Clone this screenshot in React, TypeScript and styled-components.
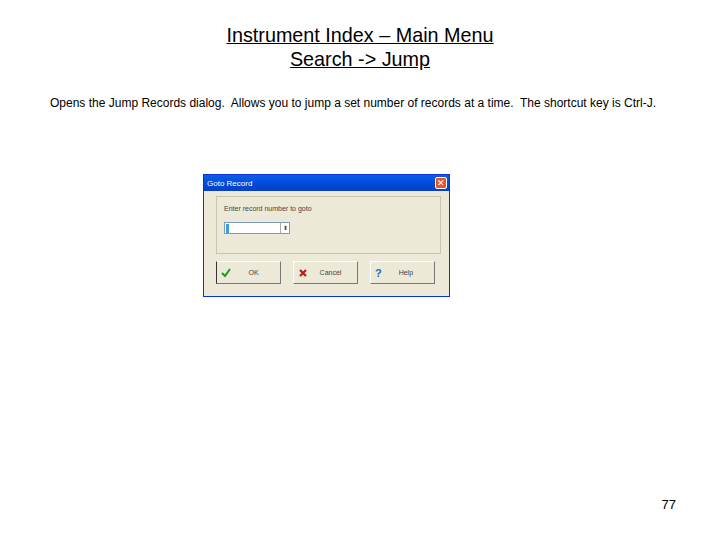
import React from 'react'
import styled, { createGlobalStyle } from 'styled-components'

const Global = createGlobalStyle`
  body { margin: 0; background: #fff; font-family: "Liberation Sans", Arial, sans-serif; }
`

const Page = styled.div`
  width: 720px;
  height: 540px;
  display: flex;
  flex-direction: column;
  color: #000;
`

const Title = styled.h1`
  margin: 23px 0 0;
  font-size: 19.8px;
  font-weight: normal;
  line-height: 24px;
  text-align: center;
  text-decoration: underline;
`

const Text = styled.p`
  margin: 25px 0 0 50px;
  font-size: 12px;
`

const DialogRow = styled.div`
  margin: 64px 0 0 203px;
`

const Window = styled.div`
  width: 247px;
  height: 123px;
  background: #ece9d8;
  border: 1px solid #0831d9;
  box-sizing: border-box;
  display: flex;
  flex-direction: column;
  font-size: 7px;
`

const TitleBar = styled.div`
  height: 16px;
  background: linear-gradient(#0a5ee6, #0049d8 60%, #0a3fc0);
  color: #fff;
  font-size: 8px;
  display: flex;
  align-items: center;
  justify-content: space-between;
  padding: 0 2px 0 3px;
`

const Close = styled.div`
  width: 12px;
  height: 12px;
  border: 1px solid #fff;
  border-radius: 2px;
  background: #e0582f;
  box-sizing: border-box;
  display: flex;
  align-items: center;
  justify-content: center;
  font-size: 9px;
  line-height: 1;
`

const Group = styled.div`
  margin: 5px 8px 0 12px;
  height: 58px;
  border: 1px solid #c8c5b4;
  padding: 8px 0 0 7px;
  box-sizing: border-box;
  color: #444;
`

const Input = styled.div`
  margin-top: 10px;
  width: 66px;
  height: 12px;
  background: #fff;
  border: 1px solid #7f9db9;
  box-sizing: border-box;
  display: flex;
  justify-content: space-between;
  align-items: center;
  font-size: 7px;
`

const Caret = styled.span`
  width: 3px;
  height: 9px;
  background: #3a9ed8;
  margin-left: 1px;
`

const Spin = styled.span`
  width: 8px;
  height: 10px;
  border-left: 1px solid #aaa;
  text-align: center;
  line-height: 10px;
  font-size: 6px;
`

const Buttons = styled.div`
  display: flex;
  gap: 12px;
  margin: 7px 0 0 12px;
`

const Button = styled.div<{ $pressed?: boolean }>`
  width: 65px;
  height: 23px;
  box-sizing: border-box;
  display: flex;
  align-items: center;
  padding: 0 4px;
  border-top: 1px solid #fff;
  border-left: 1px solid ${p => (p.$pressed ? '#333' : '#fff')};
  border-right: 1px solid #777;
  border-bottom: 1px solid #777;
  color: #444;
`

const Label = styled.span`
  flex: 1;
  text-align: center;
`

const PageNumber = styled.div`
  margin: 0 44px 28px auto;
  font-size: 13px;
`

export default function App() {
  return (
    <Page>
      <Global />
      <Title>
        Instrument Index – Main Menu
        <br />
        Search -&gt; Jump
      </Title>
      <Text>
        Opens the Jump Records dialog.&nbsp; Allows you to jump a set number of records at a time.&nbsp; The shortcut key is Ctrl-J.
      </Text>
      <DialogRow>
        <Window>
          <TitleBar>
            <span>Goto Record</span>
            <Close>✕</Close>
          </TitleBar>
          <Group>
            Enter record number to goto
            <Input>
              <Caret />
              <Spin>⬍</Spin>
            </Input>
          </Group>
          <Buttons>
            <Button $pressed>
              <svg width="10" height="10" viewBox="0 0 10 10">
                <path d="M1 5 L4 8 L9 1" stroke="#1a9a1a" strokeWidth="2" fill="none" />
              </svg>
              <Label>OK</Label>
            </Button>
            <Button>
              <svg width="10" height="10" viewBox="0 0 10 10">
                <path d="M2 2 L8 8 M8 2 L2 8" stroke="#c01818" strokeWidth="2.2" />
              </svg>
              <Label>Cancel</Label>
            </Button>
            <Button>
              <span style={{ color: '#1a6ab8', fontWeight: 'bold', fontSize: 11 }}>?</span>
              <Label>Help</Label>
            </Button>
          </Buttons>
        </Window>
      </DialogRow>
      <div style={{ flex: 1 }} />
      <PageNumber>77</PageNumber>
    </Page>
  )
}
